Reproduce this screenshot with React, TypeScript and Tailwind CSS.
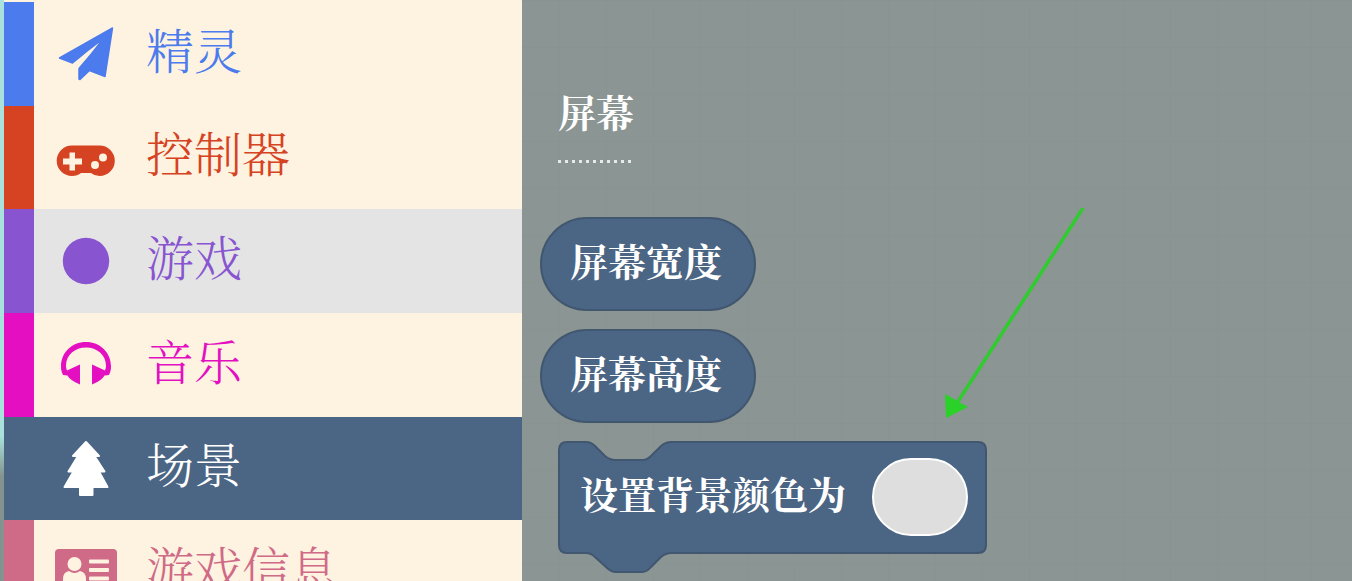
import type { ReactNode } from "react";
import { clsx } from "clsx";

interface Category {
  name: string;
  strip: string;
  row: string;
  icon: ReactNode;
}

const PlaneIcon = () => (
  <svg viewBox="0 0 64 64" className="size-16" fill="currentColor" stroke="currentColor" strokeWidth="1.5" strokeLinejoin="round">
    <path d="M5.5 36 58.500 6 51 54.500 35.500 48.500 26 57.500 25 57V46.500Q37 33 49.500 16.500Q34 28 18.500 41Z" />
  </svg>
);

const GamepadIcon = () => (
  <svg viewBox="0 0 64 64" className="size-16" fill="currentColor">
    <path
      fillRule="evenodd"
      d="M18 20.500H45.500A15.300 15.300 0 0 1 45.500 51.100Q40.500 51 37 48H27Q23.500 51 18 51.100A15.300 15.300 0 0 1 18 20.500ZM15.500 27.500V33.500H9V39.500H15.500V45.500H21V39.500H28V33.500H21V27.500ZM41 36A4 4 0 1 0 41 44A4 4 0 1 0 41 36ZM49 28.500A4 4 0 1 0 49 36.500A4 4 0 1 0 49 28.500Z"
    />
  </svg>
);

const CircleIcon = () => (
  <svg viewBox="0 0 64 64" className="size-16" fill="currentColor">
    <circle cx="32" cy="32" r="23.2" />
  </svg>
);

const HeadphonesIcon = () => (
  <svg viewBox="0 0 64 64" className="size-16" fill="currentColor">
    <path d="M9 42C7.500 39 7 36.500 7 33.500C7 19.500 18 9 32 9S57 19.500 57 33.500C57 36.500 56.500 39 55 42L50.500 42.500Q48 47.500 38 51.500V31.500L51 37.500C51.600 36 52 34.500 52 32.500C52 22 43 14.500 32 14.500S12 22 12 32.500C12 34.500 12.400 36 13 37.500L26 31.500V51.500Q16 47.500 13.500 42.500Z" />
  </svg>
);

const TreeIcon = () => (
  <svg viewBox="0 0 64 64" className="size-16" fill="currentColor" stroke="currentColor" strokeWidth="2" strokeLinejoin="round">
    <path d="M32 6 45 20H40.500L50.500 35.500H45L53.500 51H38.500V59H26V51H10.500L19.500 35.500H14.500L24 20H19Z" />
  </svg>
);

const CardIcon = () => (
  <svg viewBox="0 0 64 64" className="size-16">
    <rect x="1" y="9" width="62" height="48" rx="4" fill="currentColor" />
    <g className="fill-[#fef2e0]">
      <circle cx="20.500" cy="24" r="7" />
      <path d="M9 45V39Q9 32 15 31Q20.500 35 26 31Q32 32 32 39V45Z" />
      <rect x="35" y="19.500" width="20" height="4" rx="1" />
      <rect x="35" y="28" width="20" height="4" rx="1" />
      <rect x="35" y="36.500" width="20" height="4" rx="1" />
    </g>
  </svg>
);

const categories: Category[] = [
  { name: "精灵", strip: "bg-[#4b7bec]", row: "bg-[#fef2e0] text-[#4b7bec]", icon: <PlaneIcon /> },
  { name: "控制器", strip: "bg-[#d54322]", row: "bg-[#fef2e0] text-[#d54322]", icon: <GamepadIcon /> },
  { name: "游戏", strip: "bg-[#8854d0]", row: "bg-[#e4e4e4] text-[#8854d0]", icon: <CircleIcon /> },
  { name: "音乐", strip: "bg-[#e30fc0]", row: "bg-[#fef2e0] text-[#e30fc0]", icon: <HeadphonesIcon /> },
  { name: "场景", strip: "bg-[#4b6584]", row: "bg-[#4b6584] text-white", icon: <TreeIcon /> },
  { name: "游戏信息", strip: "bg-[#cf6a87]", row: "bg-[#fef2e0] text-[#cf6a87]", icon: <CardIcon /> },
];

const Reporter = ({ label }: { label: string }) => (
  <div className="flex h-[94px] w-fit items-center rounded-full border-2 border-[#41566f] bg-[#4b6584] pr-8 pb-2 pl-7">
    {label}
  </div>
);

export default function App() {
  return (
    <div className="flex h-screen overflow-hidden bg-[#8b9593] font-['Noto_Serif_CJK_SC','Noto_Sans_CJK_SC',serif]">
      <div className="w-1 shrink-0 bg-linear-to-b from-[#a9e2dc] from-75% to-[#84938f] to-82%" />

      <nav className="w-[518px] shrink-0 bg-[#fef2e0] pt-0.5">
        <ul className="grid h-[622px] grid-rows-6">
          {categories.map((category) => (
            <li key={category.name}>
              <button
                className={clsx(
                  "flex h-full w-full items-center text-left text-5xl font-light",
                  category.row
                )}
              >
                <span className={clsx("h-full w-[30px]", category.strip)} />
                <span className="ml-5 flex w-16 justify-center">{category.icon}</span>
                <span className="ml-7 pb-2.5 leading-none">{category.name}</span>
              </button>
            </li>
          ))}
        </ul>
      </nav>

      <main className="relative min-w-0 flex-1 bg-[linear-gradient(to_right,#89938f_1px,transparent_1px),linear-gradient(to_bottom,#89938f_1px,transparent_1px)] bg-size-[47px_47px] bg-position-[37px_0px] px-[18px] pt-[92px] text-[38px] leading-none font-bold text-white">
        <h1 className="ml-[18px] h-[68px]">屏幕</h1>
        <div className="ml-[18px] h-[3px] w-[74px] bg-[repeating-linear-gradient(to_right,#e6e9e8_0px,#e6e9e8_3px,transparent_3px,transparent_7px)]" />

        <div className="mt-[54px] flex flex-col gap-[18px]">
          <Reporter label="屏幕宽度" />
          <Reporter label="屏幕高度" />

          <div className="relative ml-[18px] flex h-[112px] w-[430px] items-center justify-between pr-5 pl-[22px]">
            <svg viewBox="0 0 430 134" className="absolute top-0 left-0 h-[134px] w-[430px]">
              <path
                d="M9 1H28Q33 1 37 5L47 15Q52 19 57 19H85Q89 19 93 15L103 5Q108 1 113 1H420Q428 1 428 9V104Q428 112 420 112H113Q108 112 103 116L93 126Q89 131 84 131H58Q53 131 48 126L37 116Q33 112 28 112H9Q1 112 1 104V9Q1 1 9 1Z"
                fill="#4b6584"
                stroke="#41566f"
                strokeWidth="2"
              />
            </svg>
            <span className="relative pb-2">设置背景颜色为</span>
            <button
              aria-label="颜色"
              className="relative h-[78px] w-24 rounded-full border-2 border-white bg-[#dedede]"
            />
          </div>
        </div>

        <svg viewBox="0 0 140 210" className="absolute top-[208px] left-[423px] h-[210px] w-[140px]">
          <path d="M138 0 12 195" stroke="#2fcb2f" strokeWidth="3.500" />
          <path d="M0 186 1 210 23 199Z" fill="#29d129" />
        </svg>
      </main>
    </div>
  );
}
